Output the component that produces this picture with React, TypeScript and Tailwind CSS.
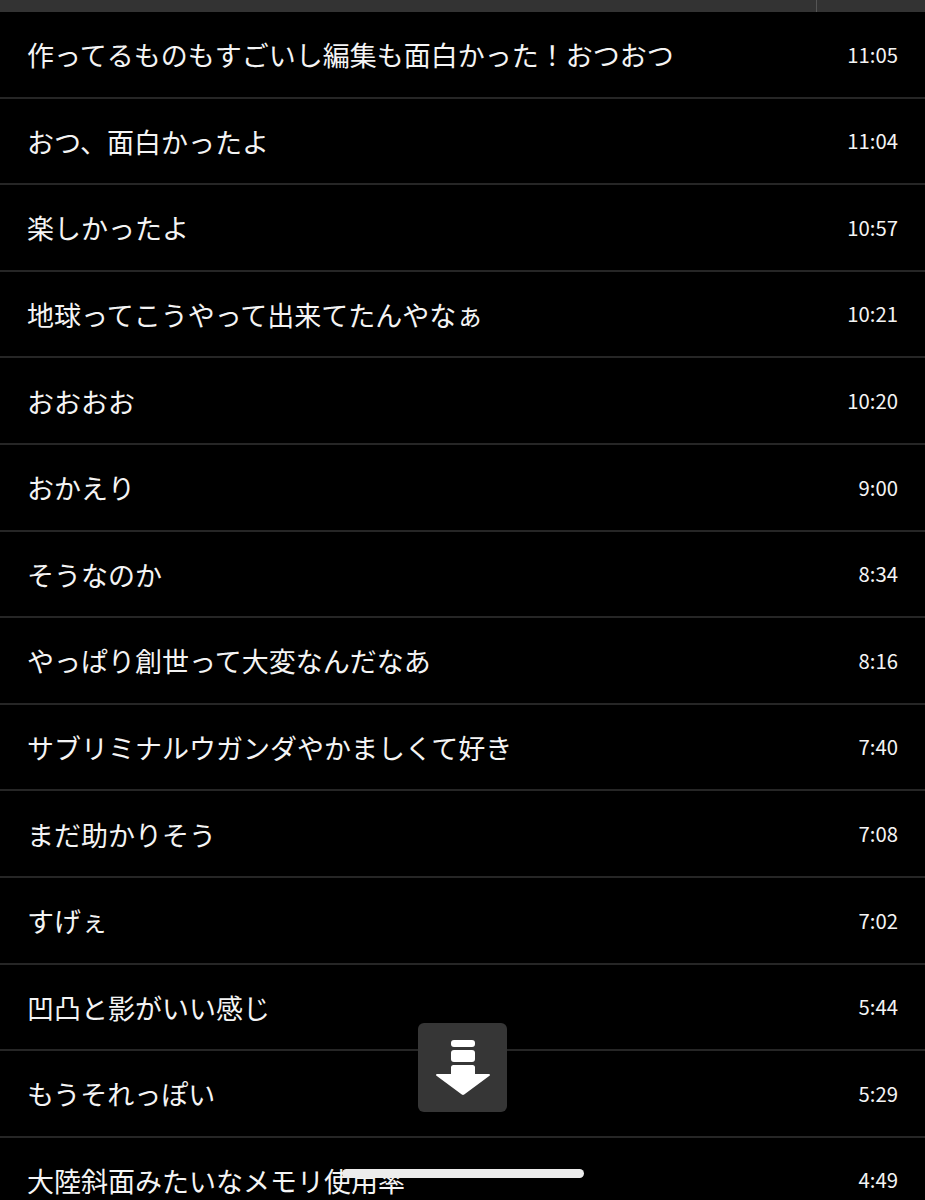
const rows = [
  { text: "作ってるものもすごいし編集も面白かった！おつおつ", time: "11:05" },
  { text: "おつ、面白かったよ", time: "11:04" },
  { text: "楽しかったよ", time: "10:57" },
  { text: "地球ってこうやって出来てたんやなぁ", time: "10:21" },
  { text: "おおおお", time: "10:20" },
  { text: "おかえり", time: "9:00" },
  { text: "そうなのか", time: "8:34" },
  { text: "やっぱり創世って大変なんだなあ", time: "8:16" },
  { text: "サブリミナルウガンダやかましくて好き", time: "7:40" },
  { text: "まだ助かりそう", time: "7:08" },
  { text: "すげぇ", time: "7:02" },
  { text: "凹凸と影がいい感じ", time: "5:44" },
  { text: "もうそれっぽい", time: "5:29" },
  { text: "大陸斜面みたいなメモリ使用率", time: "4:49" },
];

function ScrollDownIcon() {
  return (
    <svg width="54" height="56" viewBox="0 0 54 56" fill="#fff">
      <rect x="15" y="0" width="24" height="7" rx="3" />
      <rect x="15" y="10" width="24" height="12" rx="3" />
      <path d="M15 27.5a2.5 2.5 0 0 1 2.5-2.5h19a2.5 2.5 0 0 1 2.5 2.5V34h13.5c1.4 0 1.9 1 1 1.7L28.2 54.6a2 2 0 0 1-2.4 0L.5 35.7c-.9-.7-.4-1.7 1-1.7H15z" />
    </svg>
  );
}

export default function App() {
  return (
    <div className="relative h-[1200px] w-[925px] overflow-hidden bg-black font-['Noto_Sans_CJK_JP','Noto_Sans',sans-serif] text-white">
      <div className="flex h-3 justify-end bg-[#333333] pr-[108px]">
        <div className="h-full w-px bg-[#555555]" />
      </div>

      <ul>
        {rows.map((row) => (
          <li
            key={row.time}
            className="flex h-[86.6px] items-center justify-between border-b-2 border-[#262626] pl-[27px] pr-[27px] pt-px"
          >
            <span className="text-[27px] font-normal leading-none text-[#f4f4f4]">{row.text}</span>
            <span className="mb-0.5 text-[20.3px] font-normal leading-none text-[#f4f4f4]">{row.time}</span>
          </li>
        ))}
      </ul>

      <div className="absolute left-[418px] top-[1023px] flex h-[89px] w-[89px] items-center justify-center rounded-md bg-[#363636]">
        <ScrollDownIcon />
      </div>

      <div className="absolute left-[342px] top-[1169px] h-[9px] w-[242px] rounded-full bg-[#ececec]" />
    </div>
  );
}
